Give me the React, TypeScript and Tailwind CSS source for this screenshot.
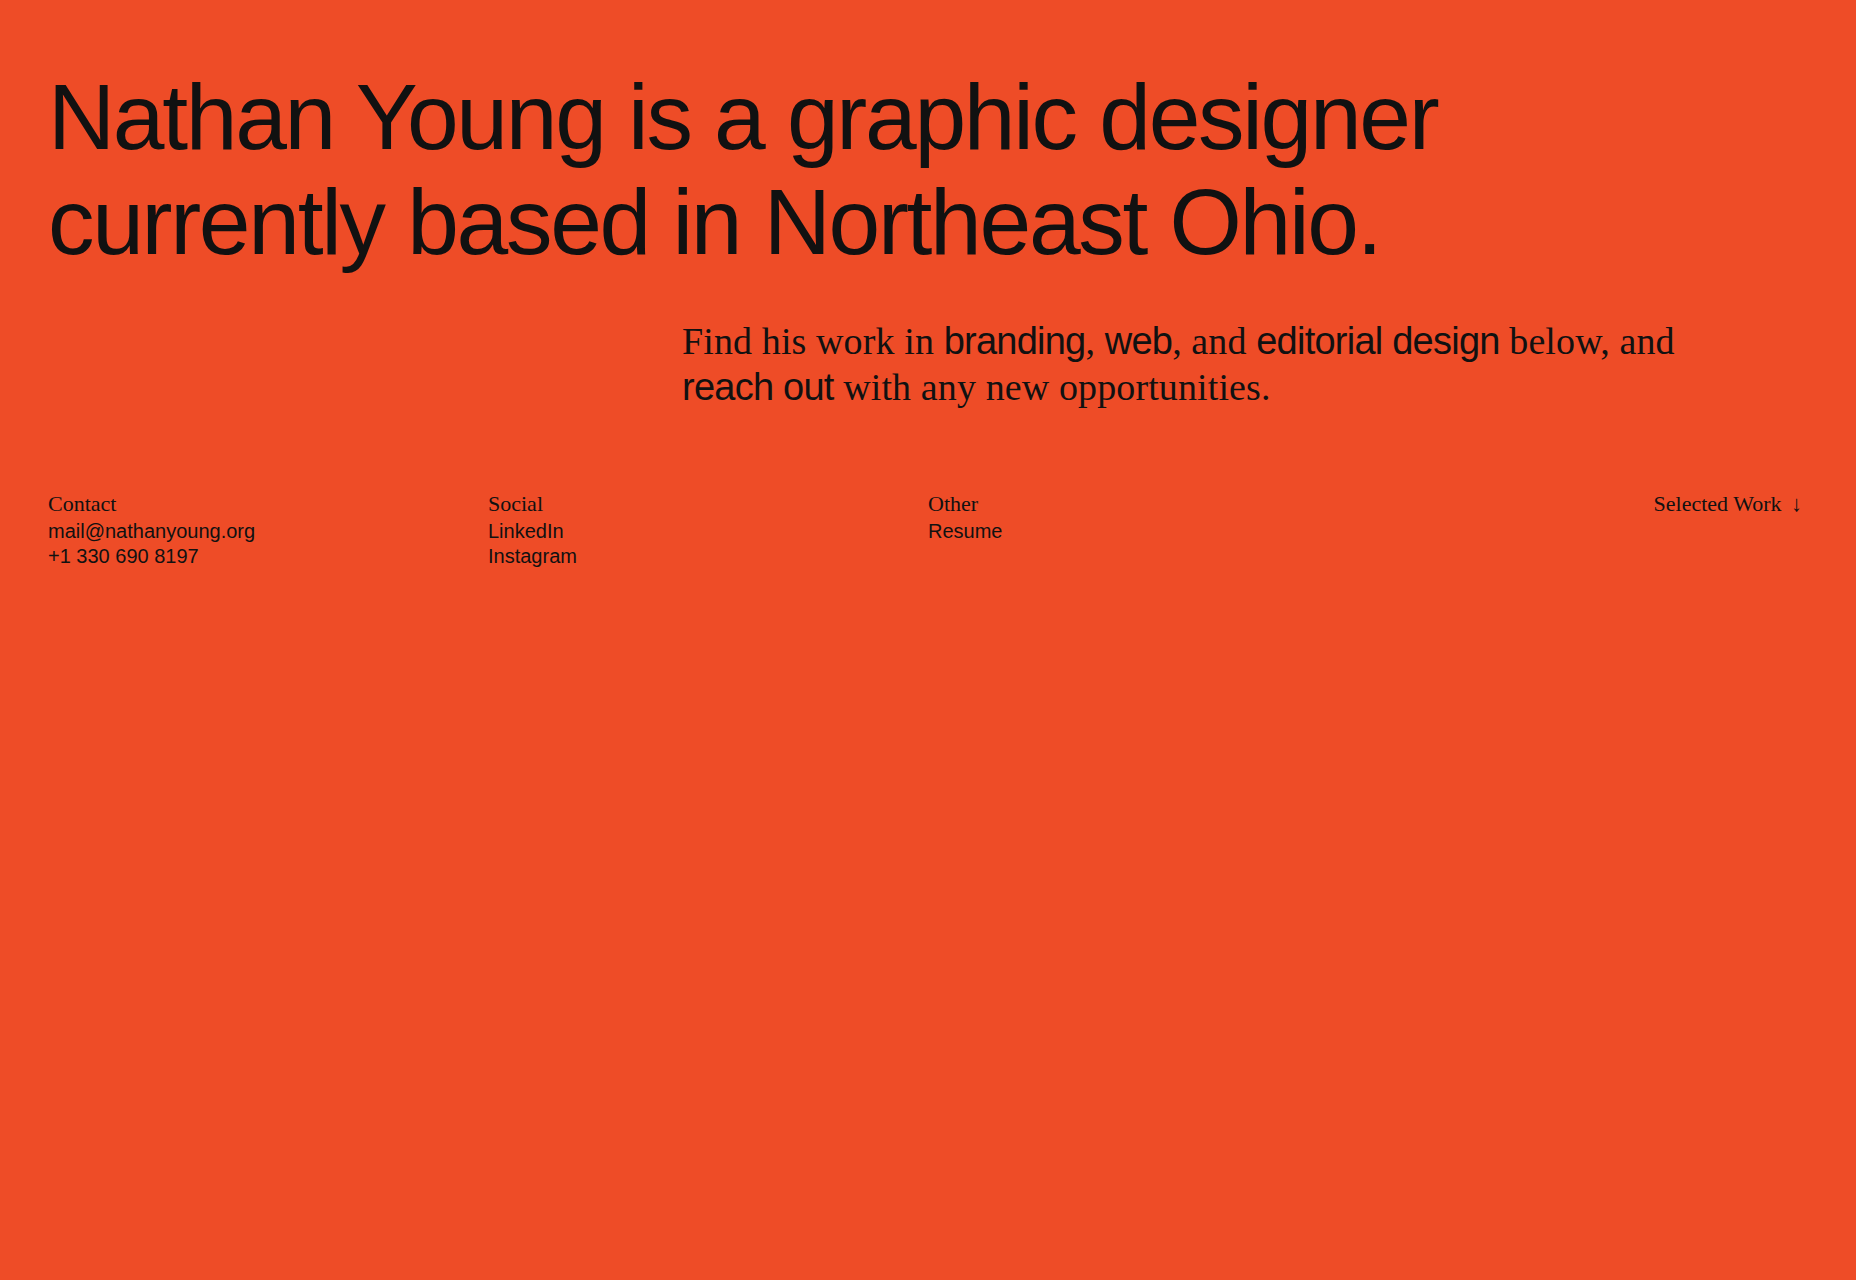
const sans = "font-['Liberation_Sans',Arial,sans-serif]";
const serif = "font-['Liberation_Serif','Times_New_Roman',serif]";

const columns = [
  { title: 'Contact', links: ['mail@nathanyoung.org', '+1 330 690 8197'] },
  { title: 'Social', links: ['LinkedIn', 'Instagram'] },
  { title: 'Other', links: ['Resume'] },
];

const link = `${sans} text-[38px] tracking-[-0.02em]`;

export default function App() {
  return (
    <div className="min-h-screen w-full bg-[#ee4c27] text-[#111] px-12 pt-[65px]">
      {/* Intro */}
      <h1 className={`${sans} text-[93px] leading-[105px] tracking-[-0.025em] max-w-[1480px]`}>
        Nathan Young is a graphic designer currently based in Northeast Ohio.
      </h1>

      <p className={`${serif} ml-[634px] mt-[43px] max-w-[1036px] text-[38px] leading-[46px] tracking-[0.003em]`}>
        Find his work in <a className={link}>branding</a>, <a className={link}>web</a>, and{' '}
        <a className={link}>editorial design</a> below, and <a className={link}>reach out</a> with any new
        opportunities.
      </p>

      {/* Links */}
      <div className="grid grid-cols-4 mt-[79px]">
        {columns.map((c) => (
          <div key={c.title} className="flex flex-col">
            <span className={`${serif} text-[22px] leading-[30px]`}>{c.title}</span>
            {c.links.map((l) => (
              <a key={l} className={`${sans} text-[20px] leading-[25px]`}>
                {l}
              </a>
            ))}
          </div>
        ))}
        <div className="flex justify-end">
          <span className={`${serif} text-[22px] leading-[30px] mr-[6px]`}>
            Selected Work <span className="ml-1">↓</span>
          </span>
        </div>
      </div>
    </div>
  );
}
